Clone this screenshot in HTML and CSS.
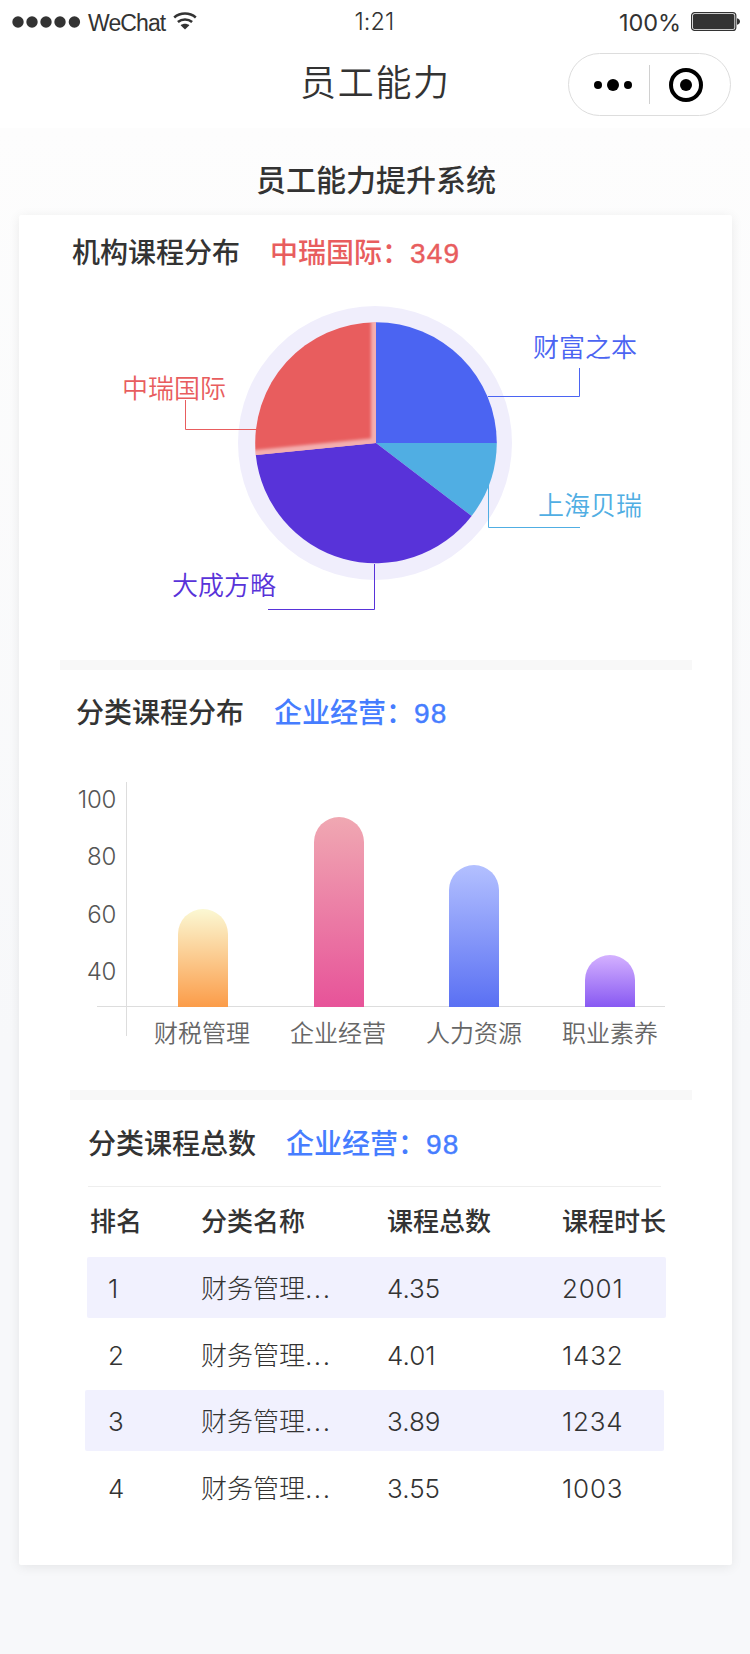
FILE: index.html
```
<!DOCTYPE html>
<html lang="zh-CN">
	<head>
		<meta charset="utf-8">
		<title>员工能力</title>
		<link rel="stylesheet" href="styles.css">
	</head>
	<body>
		<header class="top">
			<div class="status">
				<div class="carrier">
					<svg class="signal" width="70" height="12" viewBox="0 0 70 12">
						<circle cx="6" cy="6" r="5.7"/>
						<circle cx="20" cy="6" r="5.7"/>
						<circle cx="34" cy="6" r="5.7"/>
						<circle cx="48" cy="6" r="5.7"/>
						<circle cx="62.4" cy="6" r="5.7"/>
					</svg>
					<span class="name">WeChat</span>
					<svg class="wifi" width="24" height="18" viewBox="0 0 24 18">
						<path d="M1.2 5.4C7.4 0.2 16.6 0.2 22.8 5.4" fill="none" stroke="#333" stroke-width="2.6"/>
						<path d="M4.9 10C9 6.6 15 6.6 19.1 10" fill="none" stroke="#333" stroke-width="2.6"/>
						<path d="M7.6 13.2C10 11.2 14 11.2 16.4 13.2L12 17.6Z" fill="#333"/>
					</svg>
				</div>
				<div class="time">1:21</div>
				<div class="power">
					<span>100%</span>
					<svg width="49" height="19" viewBox="0 0 49 19">
						<rect x="0.6" y="0.6" width="44.2" height="17.8" rx="3" fill="none" stroke="#333" stroke-width="1.2"/>
						<rect x="2" y="2" width="41.4" height="15" rx="1.6" fill="#333"/>
						<path d="M46 6.2C50 7 50 12 46 12.8Z" fill="#333"/>
					</svg>
				</div>
			</div>
			<div class="nav">
				<h1>员工能力</h1>
				<div class="capsule">
					<svg width="40" height="14" viewBox="0 0 40 14">
						<circle cx="5" cy="7" r="4"/>
						<circle cx="20" cy="7" r="6"/>
						<circle cx="35" cy="7" r="4"/>
					</svg>
					<i></i>
					<svg width="34" height="34" viewBox="0 0 34 34">
						<circle cx="17" cy="17" r="15" fill="none" stroke="#000" stroke-width="4"/>
						<circle cx="17" cy="17" r="6"/>
					</svg>
				</div>
			</div>
		</header>

		<main>
			<h2 class="system">员工能力提升系统</h2>
			<div class="card">
				<section class="org">
					<h3>机构课程分布<span class="red">中瑞国际：<b>349</b></span></h3>
					<svg class="pie" width="713" height="330" viewBox="0 0 713 330">
						<defs>
							<clipPath id="redSlice">
								<path d="M357 158V37.3A120.7 120.7 0 0 0 236.8 170Z"/>
							</clipPath>
							<filter id="soft" x="-20%" y="-20%" width="140%" height="140%">
								<feGaussianBlur stdDeviation="1.4"/>
							</filter>
						</defs>
						<circle cx="356" cy="158" r="137" fill="#f0eefc"/>
						<path d="M357 158V37.3A120.8 120.8 0 0 1 477.8 158Z" fill="#4b64f2"/>
						<path d="M357 158H477.8A120.8 120.8 0 0 1 452.6 231Z" fill="#50aee3"/>
						<path d="M357 158L452.6 231A120.7 120.7 0 0 1 236.8 170Z" fill="#5833d9"/>
						<path d="M357 158V37.3A120.7 120.7 0 0 0 236.8 170Z" fill="#e85d5e"/>
						<!-- glow on the two straight sides of the selected slice -->
						<g clip-path="url(#redSlice)">
							<path d="M357 20V158L216 172" fill="none" stroke="#fff" stroke-opacity="0.5" stroke-width="10" filter="url(#soft)"/>
						</g>
						<g fill="none" stroke-width="1">
							<path d="M469 111.5H560.5V83" stroke="#4b64f2"/>
							<path d="M469.5 198V242.5H561" stroke="#50aee3"/>
							<path d="M237 144.5H166.5V115" stroke="#e85d5e"/>
							<path d="M355.5 279V324.5H249" stroke="#5833d9"/>
						</g>
						<g class="names">
							<text x="514" y="72" fill="#4b64f2">财富之本</text>
							<text x="519" y="230" fill="#50aee3">上海贝瑞</text>
							<text x="103" y="113" fill="#e85d5e">中瑞国际</text>
							<text x="153" y="310" fill="#5833d9">大成方略</text>
						</g>
					</svg>
				</section>

				<section class="type">
					<h3>分类课程分布<span class="blue">企业经营：<b>98</b></span></h3>
					<div class="chart">
						<div class="scale">
							<span>100</span>
							<span>80</span>
							<span>60</span>
							<span>40</span>
						</div>
						<div class="plot">
							<div class="bars">
								<div class="bar orange" style="height:98px"></div>
								<div class="bar pink" style="height:190px"></div>
								<div class="bar indigo" style="height:142px"></div>
								<div class="bar purple" style="height:52px"></div>
							</div>
							<div class="labels">
								<span>财税管理</span>
								<span>企业经营</span>
								<span>人力资源</span>
								<span>职业素养</span>
							</div>
						</div>
					</div>
				</section>

				<section class="total">
					<h3>分类课程总数<span class="blue">企业经营：<b>98</b></span></h3>
					<div class="list">
						<div class="row head">
							<span>排名</span>
							<span>分类名称</span>
							<span>课程总数</span>
							<span>课程时长</span>
						</div>
						<div class="row odd">
							<span>1</span>
							<span>财务管理<i>...</i></span>
							<span>4.35</span>
							<span>2001</span>
						</div>
						<div class="row">
							<span>2</span>
							<span>财务管理<i>...</i></span>
							<span>4.01</span>
							<span>1432</span>
						</div>
						<div class="row odd third">
							<span>3</span>
							<span>财务管理<i>...</i></span>
							<span>3.89</span>
							<span>1234</span>
						</div>
						<div class="row">
							<span>4</span>
							<span>财务管理<i>...</i></span>
							<span>3.55</span>
							<span>1003</span>
						</div>
					</div>
				</section>
			</div>
		</main>
	</body>
</html>
```
FILE: styles.css
```
*
{
	box-sizing:border-box;
}

body
{
	margin:0;
	width:750px;
	background:#f7f8fa;
	color:#333;
	font-family:"Liberation Sans","Noto Sans CJK SC",sans-serif;
}

h1,h2,h3
{
	margin:0;
}

svg
{
	display:block;
}

/* status bar and title */
.top
{
	height:128px;
	background:#fff;
}

.status
{
	display:grid;
	grid-template-columns:1fr auto 1fr;
	height:42px;
	padding:0 10px 0 12px;
	line-height:44px;
}

.carrier,.power
{
	display:flex;
	align-items:center;
}

.carrier svg
{
	margin-bottom:2px;
}

.power svg
{
	margin-bottom:2px;
}

.carrier .wifi
{
	margin-bottom:3px;
}

.signal
{
	fill:#333;
}

.name
{
	margin:0 8px 0 6px;
	font-size:23px;
	letter-spacing:-0.9px;
}

.time
{
	font-family:Inter,sans-serif;
	font-size:23.5px;
	font-weight:350;
	letter-spacing:0.1px;
	margin-left:-3px;
}

.power
{
	justify-content:flex-end;
	font-family:Inter,sans-serif;
	font-size:23.5px;
	font-weight:400;
}

.power span
{
	margin:1px 10px 0 0;
	letter-spacing:-0.1px;
}

.nav
{
	display:grid;
	grid-template-columns:1fr 163px;
	padding:11px 19px 0 300px;
}

.nav h1
{
	font-size:36px;
	font-weight:350;
	line-height:62px;
	letter-spacing:1.7px;
}

.capsule
{
	display:flex;
	align-items:center;
	height:63px;
	padding:0 27px 0 24px;
	border:1px solid #ddd;
	border-radius:32px;
	justify-content:space-between;
}

.capsule i
{
	width:1px;
	height:39px;
	margin-left:-3px;
	background:#d0d0d0;
}

/* content */
main
{
	height:1526px;
	padding:33px 18px 0 19px;
	background:linear-gradient(#fdfdfd,#f7f8fa 60%);
}

.system
{
	height:54px;
	padding-left:1px;
	font-size:30px;
	font-weight:500;
	line-height:40px;
	text-align:center;
}

.card
{
	height:1350px;
	background:#fff;
	border-radius:2px;
	box-shadow:0 2px 12px rgba(0,0,0,0.08);
}

h3
{
	font-size:28px;
	font-weight:500;
	line-height:40px;
	white-space:nowrap;
}

h3 span
{
	margin-left:30px;
}

h3 b
{
	font-weight:400;
	letter-spacing:1.2px;
	-webkit-text-stroke:0.4px;
}

.red
{
	color:#e85d5e;
}

.blue
{
	color:#467dff;
}

.org
{
	height:445px;
	padding-top:19px;
}

.org h3
{
	height:51px;
	padding-left:53px;
}

.names
{
	font-size:26px;
	font-weight:350;
}

.type
{
	height:430px;
	margin:0 40px 0 41px;
	padding-top:24px;
	border-top:10px solid #f8f8f8;
}

.type h3
{
	padding-left:16px;
}

.chart
{
	display:grid;
	grid-template-columns:56px 1fr;
	margin-top:48px;
}

.scale
{
	display:flex;
	flex-direction:column;
	padding-top:3px;
	font-family:Inter,sans-serif;
	font-size:24px;
	font-weight:300;
	letter-spacing:-0.3px;
	line-height:30px;
	gap:27.3px;
	text-align:right;
	color:#555;
}

.plot
{
	width:549px;
	height:254px;
	margin-left:10px;
	border-left:1px solid #ddd;
}

.bars
{
	display:flex;
	align-items:flex-end;
	height:225px;
	margin-left:-30px;
	padding-left:81px;
	gap:85.7px;
	background:linear-gradient(#ddd,#ddd) left bottom / 568px 1px no-repeat;
}

.bar
{
	width:50px;
	border-radius:25px 25px 0 0;
}

.orange
{
	background:linear-gradient(#fbf8d3,#fb9c49);
}

.pink
{
	background:linear-gradient(#f0a8b2,#e75399);
}

.indigo
{
	background:linear-gradient(#b3c0ff,#5a70f3);
}

.purple
{
	background:linear-gradient(#d4b1ff,#8859f2);
}

.labels
{
	display:flex;
	gap:40px;
	padding-left:27px;
	font-size:24px;
	font-weight:350;
	line-height:54px;
	color:#666;
	white-space:nowrap;
}

.total
{
	margin:0 40px 0 51px;
	padding-top:25px;
	border-top:10px solid #f8f8f8;
}

.total h3
{
	height:61px;
	padding-left:18px;
}

.list
{
	padding-left:17px;
}

.row
{
	display:grid;
	grid-template-columns:114px 186px 175px auto;
	width:579px;
	height:61px;
	margin-bottom:5.5px;
	font-family:Inter,"Noto Sans CJK SC",sans-serif;
	font-size:26px;
	font-weight:300;
	line-height:63px;
	white-space:nowrap;
}

.row span:first-child
{
	padding-left:21px;
}

.row span:last-child
{
	letter-spacing:0.8px;
}

.row i
{
	font-style:normal;
	letter-spacing:1.5px;
}

.head
{
	width:573px;
	height:71px;
	margin:0 0 0 1px;
	border-top:1px solid #eee;
	font-weight:500;
	line-height:70px;
}

.head span:first-child
{
	padding-left:3px;
}

.row.head span
{
	margin-left:-1px;
	letter-spacing:0;
}

.odd
{
	background:#f1f1fe;
	border-radius:2px;
}

.third
{
	margin-left:-2px;
}

.third span
{
	margin-left:2px;
	margin-right:-2px;
}
```
